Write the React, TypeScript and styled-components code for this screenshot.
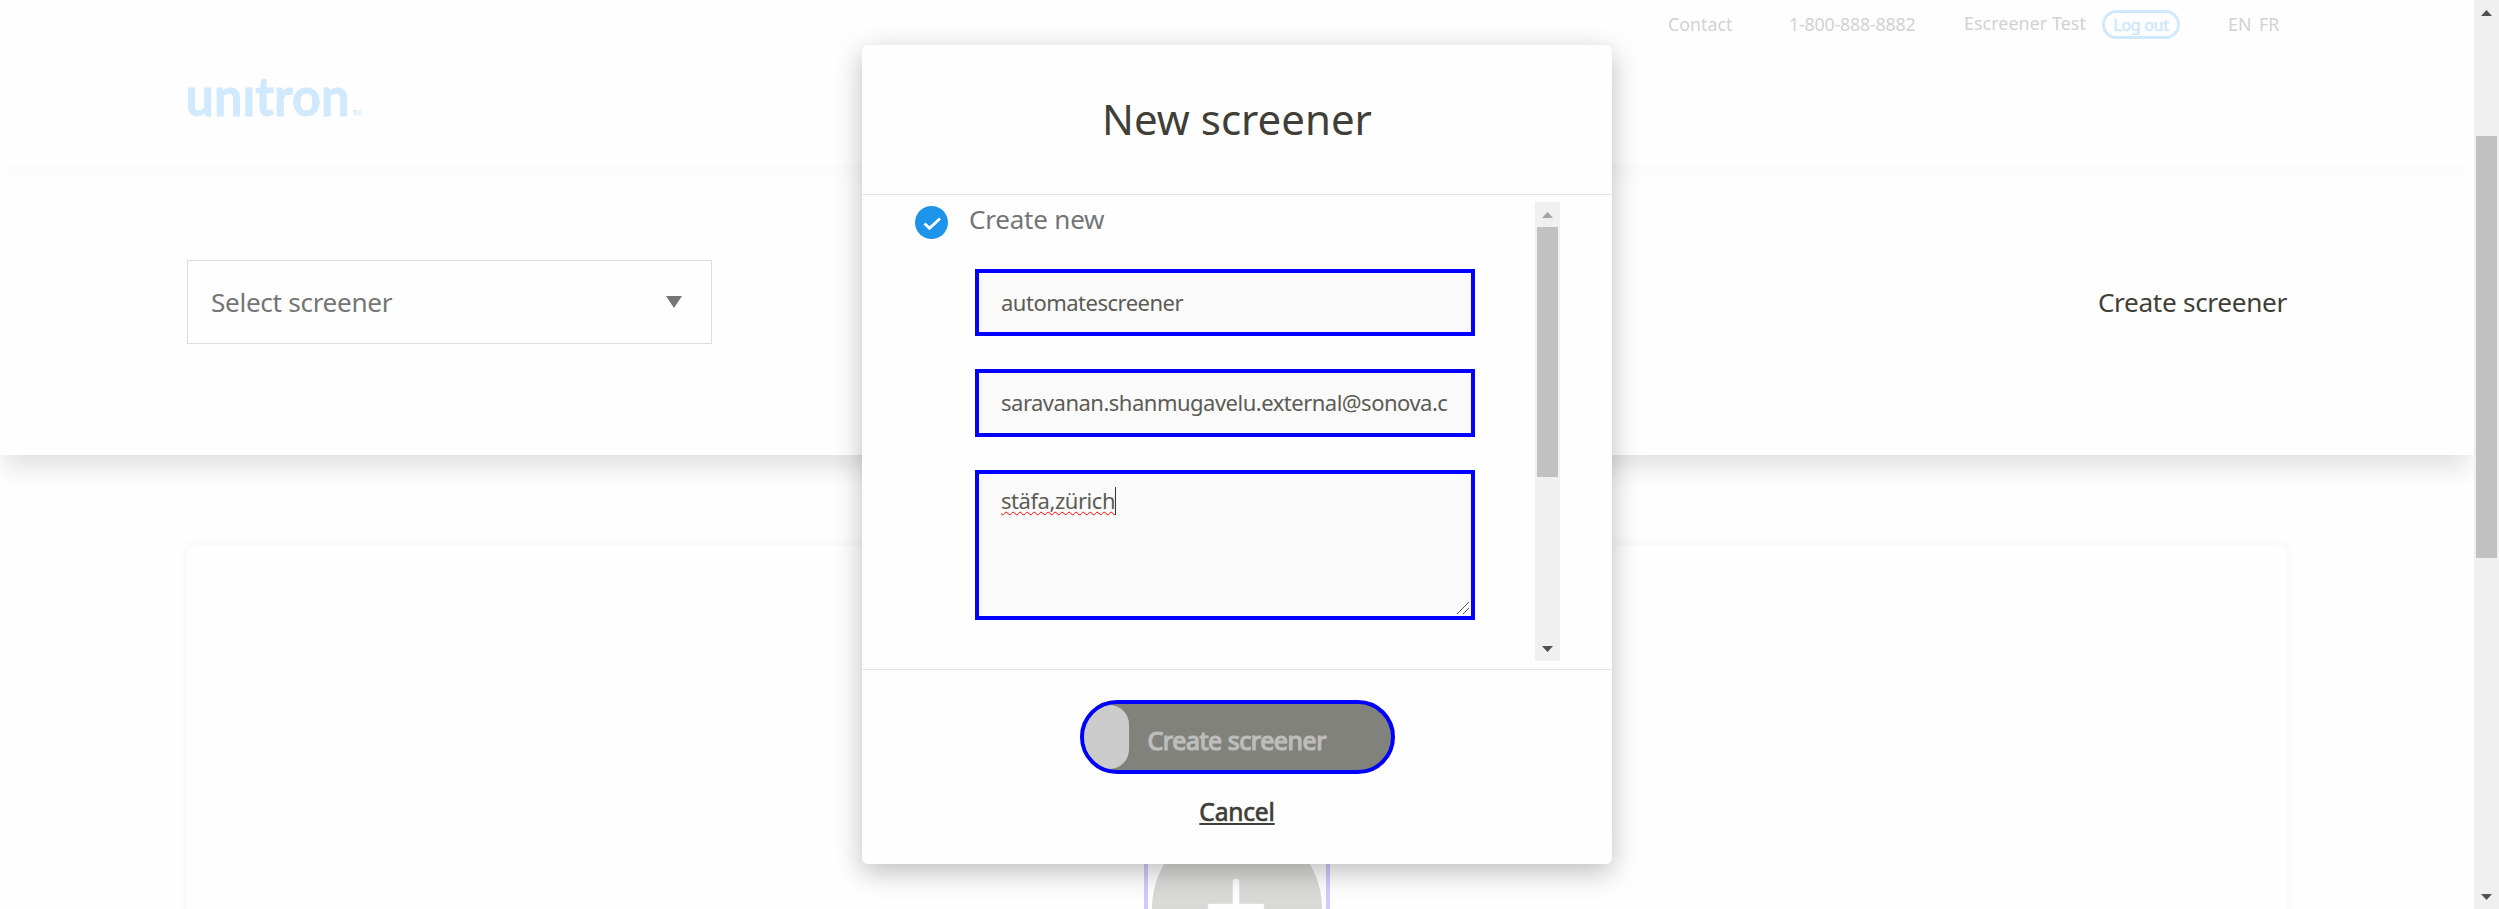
import React from "react";
import styled, { createGlobalStyle } from "styled-components";

const Global = createGlobalStyle`
  * { box-sizing: border-box; }
  html, body { margin: 0; height: 909px; overflow: hidden; }
  body { background: #fefefe; font-family: "Noto Sans", "Open Sans", sans-serif; color: #3f3f37; }
`;
const Screen = styled.div`display: flex; width: 2499px; height: 909px; overflow: hidden; position: relative;`;
const Page = styled.main`flex: 1; min-width: 0; height: 909px; display: flex; flex-direction: column; overflow: hidden;`;
const Header = styled.header`
  height: 165px; flex: none; padding: 0 187px; background: #fefefe; position: relative; z-index: 2;
  box-shadow: 0 17px 20px -5px rgba(0,0,0,0.016);
`;
const TopNav = styled.nav`
  display: flex; justify-content: flex-end; height: 50px; padding-right: 7px;
  font-size: 17.8px; line-height: 49px; color: #d2d2d0; white-space: nowrap;
`;
const NavItem = styled.span<{ $gap: number; $w: number; $track?: number }>`
  margin-right: ${p => p.$gap}px; width: ${p => p.$w}px; letter-spacing: ${p => p.$track ?? 0}px;
`;
const UserName = styled(NavItem)`line-height: 47px;`;
const Logout = styled.button`
  width: 78px; height: 29px; margin: 10px 48px 0 0; padding: 0; border: 3px solid #d1e9fc; border-radius: 15px;
  background: none; color: #d1e9fc; font: 400 16px/24px "Noto Sans", sans-serif; letter-spacing: -0.3px;
  -webkit-text-stroke: 0.7px #d1e9fc;
`;
const Logo = styled.svg`
  display: block; margin-top: 20px; overflow: visible; fill: #d1e9fc; font-family: Lato, sans-serif;
`;
const Selection = styled.section`
  height: 290px; flex: none; padding: 95px 187px 0; display: flex; justify-content: space-between; align-items: flex-start;
  background: #fefefe; box-shadow: 0 19px 22px -5px rgba(0,0,0,0.11); font-size: 26.2px; letter-spacing: -0.33px;
`;
const SelectBox = styled.div`
  width: 525px; height: 84px; padding: 0 29px 0 23px; border: 1px solid #ddd; color: #757575;
  display: flex; align-items: center; justify-content: space-between;
`;
const CreateLink = styled.a`line-height: 84px;`;
const Card = styled.section`
  margin: 90px 187px 0; height: 500px; flex: none; border-radius: 8px; box-shadow: 0 0 14px rgba(0,0,0,0.045); background: #fefefe;
  display: flex; justify-content: center; align-items: flex-start; padding-top: 268px;
`;
const AddFrame = styled.div`
  width: 186px; height: 190px; border: 4px solid #ccf; display: flex; justify-content: center; padding-top: 6px;
`;

const Bar = styled.div<{ $h: number }>`width: 25px; height: ${p => p.$h}px; flex: none; background: #f0f0f0; display: flex; flex-direction: column; align-items: center;`;
const Thumb = styled.div<{ $h: number; $top: number }>`width: 21px; height: ${p => p.$h}px; margin-top: ${p => p.$top}px; background: #c1c1c1;`;
const ArrowSlot = styled.div`height: 25px; width: 25px; display: flex; justify-content: center; align-items: center;`;
const Spring = styled.div`flex: 1;`;

const Dialog = styled.div`
  position: absolute; left: 862px; top: 45px; width: 750px; height: 819px; border-radius: 6px; background: #fefefe; z-index: 5;
  box-shadow: 0 8px 28px rgba(0,0,0,0.26); display: flex; flex-direction: column;
`;
const DialogTitle = styled.h1`margin: 0; height: 150px; border-bottom: 1px solid #e5e5e5; text-align: center; font-weight: 400; font-size: 42px; line-height: 148px;`;
const DialogBody = styled.div`height: 475px; border-bottom: 1px solid #e5e5e5; padding: 7px 52px 0 53px; display: flex; justify-content: space-between;`;
const Form = styled.div`width: 560px; display: flex; flex-direction: column;`;
const Option = styled.div`
  display: flex; height: 67px; padding-top: 4px; color: #757575; font-size: 26px; line-height: 27px; gap: 21px; letter-spacing: -0.2px;
`;
const Field = styled.div<{ $h: number; $gap: number }>`
  margin: 0 0 ${p => p.$gap}px 60px; width: 500px; height: ${p => p.$h}px; border: 4px solid #00f; background: #fafafa;
  padding: 0 18px 0 22px; color: #5c5c55; font-size: 22px; line-height: ${p => p.$h - 9}px; white-space: nowrap; position: relative;
  letter-spacing: -0.5px;
`;
const Email = styled(Field)`line-height: 58px;`;
const Area = styled(Field)`padding-top: 12px; line-height: 28px; display: flex; align-items: flex-start; letter-spacing: -0.45px;`;
const Misspelt = styled.span`text-decoration: underline wavy #f00 1px; text-underline-offset: 2px; text-decoration-skip-ink: none;`;
const Caret = styled.i`width: 1px; height: 28px; margin-top: 1px; background: #333;`;
const Grip = styled.svg`position: absolute; right: 1px; bottom: 1px;`;
const DialogFooter = styled.div`display: flex; flex-direction: column; align-items: center; padding-top: 30px;`;
const Submit = styled.button`
  width: 315px; height: 74px; border: 4px solid #00f; border-radius: 37px; background: #82827d; padding: 0; overflow: hidden;
  display: flex; align-items: center; color: #bdbdbb; font: 400 25px/66px "Noto Sans", sans-serif; letter-spacing: -0.45px; white-space: nowrap;
  -webkit-text-stroke: 1.2px #bdbdbb;
`;
const Knob = styled.span`width: 45px; height: 64px; border-radius: 26px 20px 20px 26px; background: #ccc; margin-right: 19px;`;
const SubmitLabel = styled.span`padding-top: 5px;`;
const Cancel = styled.a`
  margin-top: 20px; font-size: 24.6px; line-height: 35px; letter-spacing: -0.2px; -webkit-text-stroke: 0.7px #3f3f37;
  text-decoration: underline 2px; text-underline-offset: 2px;
`;

const Arrow = ({ up, color = "#505050" }: { up?: boolean; color?: string }) => (
  <svg width="11" height="6" viewBox="0 0 11 6"><path d={up ? "M5.5 0L11 6H0Z" : "M0 0H11L5.5 6Z"} fill={color} /></svg>
);

export default function App() {
  return (
    <Screen>
      <Global />
      <Page>
        <Header>
          <TopNav>
            <NavItem $w={65} $gap={56}>Contact</NavItem>
            <NavItem $w={126} $gap={49} $track={-0.18}>1-800-888-8882</NavItem>
            <UserName $w={123} $gap={15} $track={0.1}>Escreener Test</UserName>
            <Logout>Log out</Logout>
            <NavItem $w={24} $gap={7}>EN</NavItem>
            <NavItem $w={21} $gap={0}>FR</NavItem>
          </TopNav>
          <Logo width="180" height="60">
            <text x="-1.5" y="46" fontSize="54" fontWeight="700" stroke="#d1e9fc" strokeWidth="0.8" textLength="164" lengthAdjust="spacingAndGlyphs">unıtron</text>
            <text x="165" y="46" fontSize="7" textLength="9">TM</text>
          </Logo>
        </Header>
        <Selection>
          <SelectBox>
            Select screener
            <svg width="16" height="12"><path d="M0 0H16L8 12Z" fill="#757575" /></svg>
          </SelectBox>
          <CreateLink>Create screener</CreateLink>
        </Selection>
        <Card>
          <AddFrame>
            <svg width="170" height="170">
              <circle cx="85" cy="85" r="85" fill="#d9d9d7" />
              <path d="M84 59V111M59 84H109" stroke="#fefefe" strokeWidth="6.5" strokeLinecap="round" />
            </svg>
          </AddFrame>
        </Card>
      </Page>
      <Bar $h={909}>
        <ArrowSlot><Arrow up /></ArrowSlot>
        <Thumb $h={422} $top={111} />
        <Spring />
        <ArrowSlot><Arrow /></ArrowSlot>
      </Bar>
      <Dialog>
        <DialogTitle>New screener</DialogTitle>
        <DialogBody>
          <Form>
            <Option>
              <svg width="33" height="33">
                <circle cx="16.5" cy="16.5" r="16.5" fill="#1c94e9" />
                <path d="M9.5 17.5L14.5 22.3L25 12.5" fill="none" stroke="#fff" strokeWidth="2.8" />
              </svg>
              Create new
            </Option>
            <Field $h={67} $gap={33}>automatescreener</Field>
            <Email $h={68} $gap={33}>saravanan.shanmugavelu.external@sonova.c</Email>
            <Area $h={150} $gap={0}>
              <Misspelt>stäfa,zürich</Misspelt>
              <Caret />
              <Grip width="14" height="14"><path d="M1 13L13 1M7 13L13 7" stroke="#555" /></Grip>
            </Area>
          </Form>
          <Bar $h={459}>
            <ArrowSlot><Arrow up color="#a3a3a3" /></ArrowSlot>
            <Thumb $h={250} $top={0} />
            <Spring />
            <ArrowSlot><Arrow /></ArrowSlot>
          </Bar>
        </DialogBody>
        <DialogFooter>
          <Submit><Knob /><SubmitLabel>Create screener</SubmitLabel></Submit>
          <Cancel>Cancel</Cancel>
        </DialogFooter>
      </Dialog>
    </Screen>
  );
}
